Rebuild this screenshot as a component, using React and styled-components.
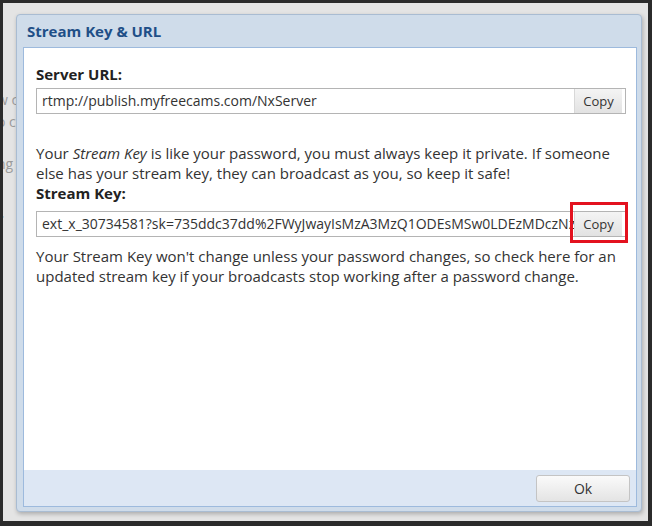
import React from "react";
import styled, { createGlobalStyle } from "styled-components";

const Global = createGlobalStyle`
  html, body { margin: 0; padding: 0; }
  body { font-family: "Open Sans", "Noto Sans", sans-serif; }
`;

// fundo da pagina atras do modal
const Screen = styled.div`
  position: relative;
  width: 652px;
  height: 526px;
  box-sizing: border-box;
  border-style: solid;
  border-color: #2b2b2b;
  border-width: 3px 4px 5px 3px;
  background: #e4e4e4;
  overflow: hidden;
`;

const Backdrop = styled.div`
  display: flex;
  flex-direction: column;
  padding: 86px 0 0 0;
  margin-left: -6px;
  font-size: 14px;
  line-height: 22px;
  color: #9b9b9b;
`;

const BgLine = styled.div`
  margin-top: ${(p) => p.gap || 0}px;
  color: ${(p) => (p.link ? "#6a6ad0" : "#9b9b9b")};
  font-weight: ${(p) => (p.link ? 700 : 400)};
`;

const Dialog = styled.div`
  position: absolute;
  left: 13px;
  top: 11px;
  width: 626px;
  height: 498px;
  box-sizing: border-box;
  display: flex;
  flex-direction: column;
  background: #cfdcea;
  border: 1px solid #a9bcd2;
  border-radius: 4px;
  box-shadow: 1px 2px 4px rgba(0, 0, 0, 0.25);
`;

const Header = styled.div`
  height: 32px;
  display: flex;
  align-items: center;
  padding-left: 10px;
  font-size: 15px;
  font-weight: 700;
  color: #1f4f87;
`;

const Frame = styled.div`
  flex: 1;
  display: flex;
  flex-direction: column;
  margin: 0 4px 4px 6px;
  border: 1px solid #9dbadd;
  background: #dde7f4;
`;

const Body = styled.div`
  flex: 1;
  background: #fff;
  padding: 16px 10px 0 12px;
  font-size: 15px;
  line-height: 20px;
  color: #333;
`;

const Label = styled.div`
  font-weight: 700;
  color: #222;
`;

const Field = styled.div`
  position: relative;
  display: flex;
  align-items: stretch;
  height: 26px;
  box-sizing: border-box;
  margin-top: ${(p) => p.top}px;
  border: 1px solid #b4b4b4;
  background: #fff;
`;

const Value = styled.div`
  flex: 1;
  overflow: hidden;
  white-space: nowrap;
  padding: 2px 0 0 5px;
  font-size: 14px;
  line-height: 20px;
  color: #333;
`;

const CopyBtn = styled.button`
  position: relative;
  width: 48px;
  margin: 0 3px 0 0;
  padding: 0;
  border: none;
  border-left: 1px solid #d8d8d8;
  background: linear-gradient(#f4f4f4, #e2e2e2);
  font-family: inherit;
  font-size: 13px;
  color: #333;
`;

const Highlight = styled.span`
  position: absolute;
  left: -5px;
  right: -6px;
  top: -10px;
  bottom: -7px;
  border: 3px solid #e3121f;
  pointer-events: none;
`;

const Para = styled.p`
  margin: ${(p) => p.top}px 0 0 0;
`;

const Footer = styled.div`
  height: 36px;
  display: flex;
  align-items: center;
  justify-content: flex-end;
  padding-right: 6px;
`;

const OkBtn = styled.button`
  width: 94px;
  height: 27px;
  border: 1px solid #c4c4c4;
  border-radius: 3px;
  background: linear-gradient(#fafafa, #e4e4e4);
  font-family: inherit;
  font-size: 14px;
  color: #333;
`;

const App = () => {
  return (
    <Screen>
      <Global />
      <Backdrop>
        <BgLine>w c</BgLine>
        <BgLine>o c</BgLine>
        <BgLine gap={20}>ng</BgLine>
        <BgLine gap={33} link>
          r
        </BgLine>
      </Backdrop>
      <Dialog>
        <Header>Stream Key &amp; URL</Header>
        <Frame>
          <Body>
            <Label>Server URL:</Label>
            <Field top={4}>
              <Value>rtmp://publish.myfreecams.com/NxServer</Value>
              <CopyBtn>Copy</CopyBtn>
            </Field>
            <Para top={29}>
              Your <i>Stream Key</i> is like your password, you must always keep
              it private. If someone else has your stream key, they can
              broadcast as you, so keep it safe!
            </Para>
            <Label>Stream Key:</Label>
            <Field top={8}>
              <Value>
                ext_x_30734581?sk=735ddc37dd%2FWyJwayIsMzA3MzQ1ODEsMSw0LDEzMDczNzQ5NjUsMF0%3D
              </Value>
              <CopyBtn>
                Copy
                <Highlight />
              </CopyBtn>
            </Field>
            <Para top={9}>
              Your Stream Key won't change unless your password changes, so
              check here for an updated stream key if your broadcasts stop
              working after a password change.
            </Para>
          </Body>
          <Footer>
            <OkBtn>Ok</OkBtn>
          </Footer>
        </Frame>
      </Dialog>
    </Screen>
  );
};

export default App;
